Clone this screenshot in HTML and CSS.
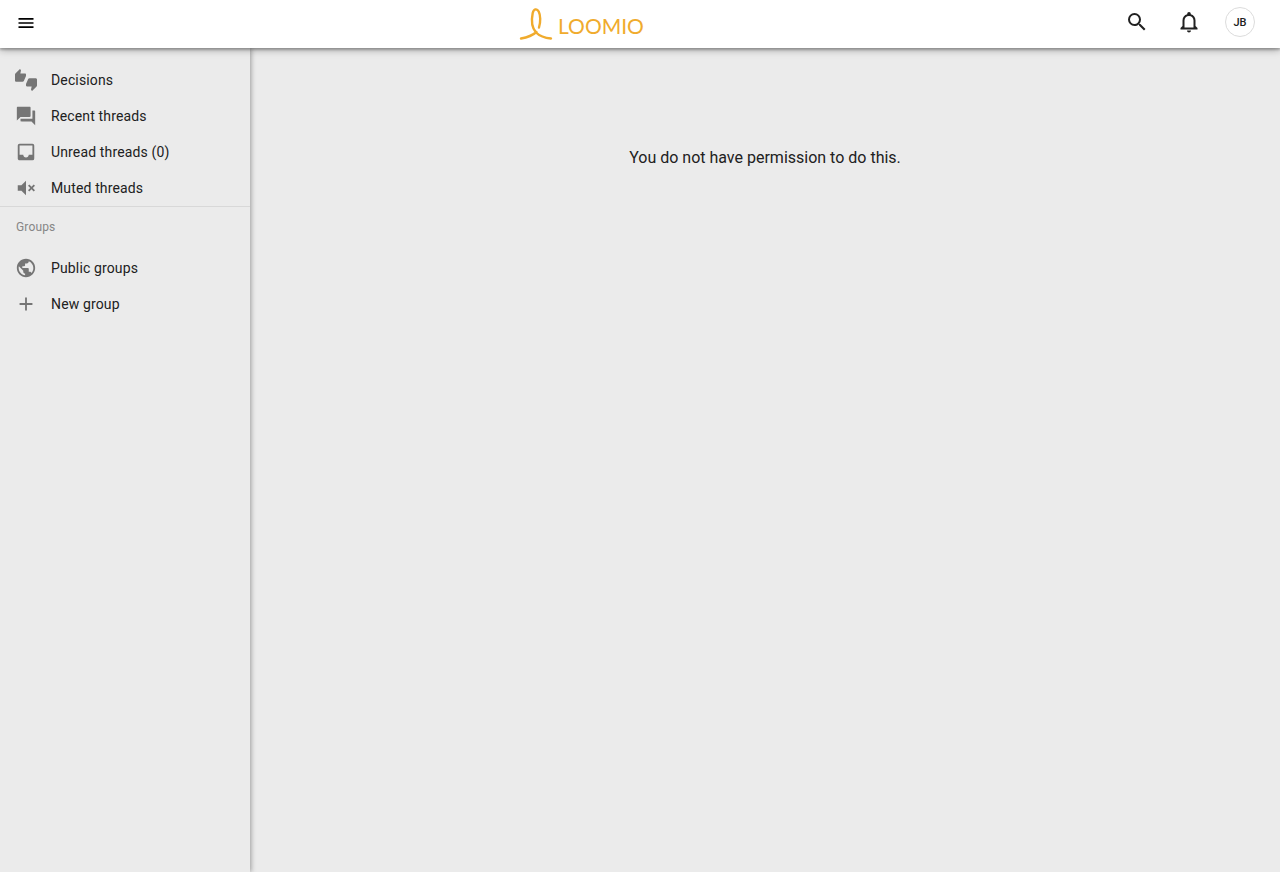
FILE: index.html
```html
<!DOCTYPE html>
<html lang="en">
<head>
<meta charset="utf-8">
<meta name="viewport" content="width=device-width, initial-scale=1">
<title>Loomio</title>
<link rel="stylesheet" href="styles.css">
</head>
<body>
<header class="navbar">
  <div class="navbar-left">
    <button class="icon-button" type="button" aria-label="Toggle sidebar">
      <svg class="icon-menu" viewBox="0 0 24 24"><path d="M3 18h18v-2H3v2zm0-5h18v-2H3v2zm0-7v2h18V6H3z"/></svg>
    </button>
  </div>
  <a class="logo" href="#" aria-label="Loomio">
    <svg class="logo-art" viewBox="0 0 128 40">
      <path class="logo-loop" d="M3 34.500C9 33.500 14.500 31.500 18.500 28M21 23.500C22.800 18 22.500 11 20.700 7.500C18.800 4 15.800 5 14.700 9C13.300 16 14 24 18 28.500C21.500 32 27 34 33 34.500"/>
      <text class="logo-word" x="40" y="30">LOOMIO</text>
    </svg>
  </a>
  <div class="navbar-right">
    <button class="icon-button" type="button" aria-label="Search">
      <svg class="icon-large" viewBox="0 0 24 24"><path d="M15.500 14h-.79l-.28-.27A6.471 6.471 0 0 0 16 9.500 6.500 6.500 0 1 0 9.500 16c1.610 0 3.090-.59 4.230-1.570l.27.28v.79l5 4.990L20.490 19l-4.990-5zm-6 0C7.010 14 5 11.990 5 9.500S7.010 5 9.500 5 14 7.010 14 9.500 11.990 14 9.500 14z"/></svg>
    </button>
    <button class="icon-button" type="button" aria-label="Notifications">
      <svg class="icon-large" viewBox="0 0 24 24"><path d="M10 20.500h4c0 1.100-.9 2-2 2s-2-.9-2-2zm10.500-2.500v1.500h-17V18l2-2v-5.500c0-3.100 1.900-5.500 4.700-6.200V3.700a1.800 1.800 0 1 1 3.600 0v.6c2.800.7 4.700 3.100 4.700 6.200V16l2 2zm-4-7.500c0-2.600-1.900-4.500-4.500-4.500s-4.500 1.900-4.500 4.500V17.500h9v-7z"/></svg>
    </button>
    <button class="avatar" type="button" aria-label="User menu">JB</button>
  </div>
</header>
<div class="layout">
  <nav class="sidebar">
    <ul class="nav-list nav-threads">
      <li><a class="nav-item" href="#"><svg class="nav-icon" viewBox="0 0 24 24"><path d="M12 6c0-.55-.45-1-1-1H5.820l.66-3.180.02-.23c0-.31-.13-.59-.33-.8L5.380 0 .44 4.940C.17 5.210 0 5.590 0 6v6.500c0 .83.67 1.500 1.500 1.500h6.750c.62 0 1.150-.38 1.380-.91l2.260-5.290c.07-.17.110-.36.110-.55V6zm10.500 4h-6.750c-.62 0-1.150.38-1.380.91l-2.260 5.290c-.07.170-.110.360-.110.550V18c0 .55.450 1 1 1h5.180l-.66 3.180-.02.240c0 .310.130.590.330.800l.790.780 4.940-4.940c.270-.270.440-.650.440-1.060v-6.500c0-.830-.670-1.500-1.500-1.500z"/></svg>Decisions</a></li>
      <li><a class="nav-item" href="#"><svg class="nav-icon" viewBox="0 0 24 24"><path d="M21 6h-2v9H6v2c0 .55.450 1 1 1h11l4 4V7c0-.55-.45-1-1-1zm-4 6V3c0-.55-.45-1-1-1H3c-.55 0-1 .45-1 1v14l4-4h10c.55 0 1-.45 1-1z"/></svg>Recent threads</a></li>
      <li><a class="nav-item" href="#"><svg class="nav-icon" viewBox="0 0 24 24"><path d="M19 3H5a2 2 0 0 0-2 2v14c0 1.100.88 2 2 2h14a2 2 0 0 0 2-2V5a2 2 0 0 0-2-2zm0 12h-4c0 1.660-1.350 3-3 3s-3-1.340-3-3H5V5h14v10z"/></svg>Unread threads (0)</a></li>
      <li><a class="nav-item" href="#"><svg class="nav-icon" viewBox="0 0 24 24"><path d="M3 9v6h4l5 5V4L7 9H3zm13.600 3-2.400-2.400 1.400-1.400 2.400 2.400 2.400-2.400 1.400 1.400-2.400 2.400 2.400 2.400-1.400 1.400-2.400-2.400-2.400 2.400-1.400-1.400z"/></svg>Muted threads</a></li>
    </ul>
    <h2 class="nav-heading">Groups</h2>
    <ul class="nav-list">
      <li><a class="nav-item" href="#"><svg class="nav-icon" viewBox="0 0 24 24"><path d="M12 2C6.480 2 2 6.480 2 12s4.480 10 10 10 10-4.480 10-10S17.520 2 12 2zm-1 17.930c-3.950-.49-7-3.850-7-7.930 0-.62.080-1.210.210-1.790L9 15v1c0 1.100.9 2 2 2v1.930zm6.900-2.540c-.26-.81-1-1.390-1.900-1.390h-1v-3c0-.55-.45-1-1-1H8v-2h2c.55 0 1-.45 1-1V7h2c1.100 0 2-.9 2-2v-.41c2.930 1.190 5 4.060 5 7.410 0 2.080-.8 3.970-2.100 5.390z"/></svg>Public groups</a></li>
      <li><a class="nav-item" href="#"><svg class="nav-icon" viewBox="0 0 24 24"><path d="M19 13h-6v6h-2v-6H5v-2h6V5h2v6h6v2z"/></svg>New group</a></li>
    </ul>
  </nav>
  <main class="content">
    <p class="message">You do not have permission to do this.</p>
  </main>
</div>
</body>
</html>
```
FILE: styles.css
```css
* { box-sizing: border-box; }

body {
  margin: 0;
  min-height: 100vh;
  display: flex;
  flex-direction: column;
  background: #ebebeb;
  color: #212121;
  font-family: Roboto, "Liberation Sans", sans-serif;
  font-size: 14px;
}

button {
  border: 0;
  padding: 0;
  font: inherit;
  color: inherit;
  cursor: pointer;
}

svg { display: block; fill: currentColor; }

.navbar {
  z-index: 2;
  position: relative;
  display: flex;
  align-items: center;
  justify-content: space-between;
  height: 48px;
  padding: 0 25px 0 6px;
  background: #fff;
  box-shadow: 0 1px 8px rgba(0, 0, 0, 0.4), 0 2px 2px rgba(0, 0, 0, 0.2);
}

.navbar-left, .navbar-right { display: flex; align-items: center; }
.navbar-left { padding-bottom: 2px; color: #000; }
.navbar-right { gap: 12px; padding-bottom: 4px; }

.icon-button {
  display: grid;
  place-items: center;
  width: 40px;
  height: 40px;
  background: none;
}

.icon-menu { width: 20px; height: 20px; }
.icon-large { width: 24px; height: 24px; }

.avatar {
  width: 30px;
  height: 30px;
  margin-left: 4px;
  border: 1px solid #dcdcdc;
  border-radius: 50%;
  background: #fff;
  font-size: 11px;
  line-height: 30px;
  font-weight: 500;
}

.logo { color: #f0ab2d; }
.logo-art { width: 128px; height: 40px; }

.logo-loop {
  fill: none;
  stroke: currentColor;
  stroke-width: 2.4;
  stroke-linecap: round;
}

.logo-word {
  font-family: Lato, sans-serif;
  font-size: 21px;
}

.layout { flex: 1; display: flex; }

.sidebar {
  width: 250px;
  padding-top: 14px;
  letter-spacing: 0.01em;
  box-shadow: 1px 0 5px rgba(0, 0, 0, 0.35);
}

.nav-list { list-style: none; margin: 0; padding: 0; }
.nav-threads { border-bottom: 1px solid #d8d8d8; }

.nav-item {
  display: flex;
  align-items: center;
  gap: 13px;
  height: 36px;
  padding: 0 14px;
  color: inherit;
  text-decoration: none;
}

.nav-icon {
  width: 24px;
  height: 24px;
  padding: 1px;
  color: #757575;
}

.nav-heading {
  margin: 0;
  padding: 12px 16px 15px;
  font-size: 12px;
  line-height: 16px;
  font-weight: 400;
  color: #868686;
}

.content { flex: 1; padding: 98px 16px 16px; }

.message {
  margin: 0;
  font-size: 16px;
  line-height: 24px;
  text-align: center;
}
```
